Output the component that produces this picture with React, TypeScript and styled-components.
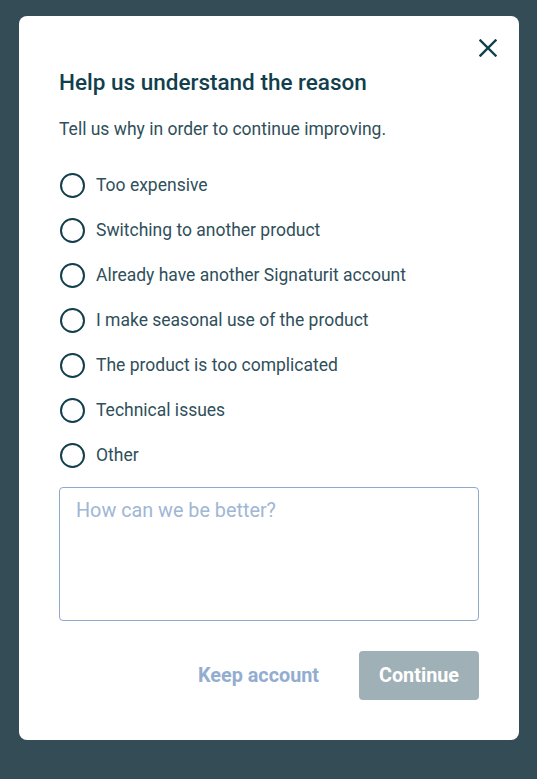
import React from "react";
import styled, { createGlobalStyle } from "styled-components";

const Global = createGlobalStyle`
  html, body { margin: 0; padding: 0; }
  body {
    background: #344c56;
    font-family: Roboto, "Noto Sans", Arial, sans-serif;
    width: 537px;
    height: 779px;
    overflow: hidden;
  }
`;

const Page = styled.div`
  padding: 16px 19px;
  box-sizing: border-box;
`;

const Modal = styled.div`
  position: relative;
  width: 500px;
  height: 724px;
  background: #ffffff;
  border-radius: 8px;
  box-sizing: border-box;
  padding: 53px 40px 40px 40px;
  display: flex;
  flex-direction: column;
`;

const Close = styled.button`
  position: absolute;
  top: 22px;
  right: 21px;
  width: 20px;
  height: 20px;
  padding: 0;
  border: none;
  background: none;
  cursor: pointer;
  display: flex;
  align-items: center;
  justify-content: center;
`;

const Title = styled.h2`
  margin: 0;
  font-size: 22.5px;
  font-weight: 500;
  line-height: 26px;
  color: #113f4e;
`;

const Subtitle = styled.p`
  margin: 24px 0 0 0;
  font-size: 17.5px;
  line-height: 21px;
  color: #2f4f5b;
`;

const Options = styled.div`
  display: flex;
  flex-direction: column;
  gap: 21px;
  margin-top: 33px;
  padding-left: 1px;
`;

const Option = styled.label`
  display: flex;
  align-items: center;
  gap: 11px;
  height: 24px;
  font-size: 17.5px;
  color: #2f4f5b;
  cursor: pointer;
`;

const Circle = styled.span`
  width: 25px;
  height: 25px;
  box-sizing: border-box;
  border: 2px solid #123f4e;
  border-radius: 50%;
  flex-shrink: 0;
`;

const TextArea = styled.textarea`
  margin-top: 20px;
  height: 134px;
  box-sizing: border-box;
  border: 1px solid #8ea9cc;
  border-radius: 4px;
  padding: 11px 16px;
  font-family: Roboto, "Noto Sans", Arial, sans-serif;
  font-size: 19.8px;
  color: #2f4f5b;
  resize: none;
  outline: none;
  &::placeholder {
    color: #a0b6d4;
  }
`;

const Actions = styled.div`
  display: flex;
  justify-content: flex-end;
  align-items: center;
  gap: 24px;
  margin-top: 30px;
`;

const TextButton = styled.button`
  background: none;
  border: none;
  font-family: Roboto, "Noto Sans", Arial, sans-serif;
  font-size: 19.8px;
  font-weight: 700;
  color: #93add0;
  padding: 0 16px;
  height: 49px;
`;

const PrimaryButton = styled.button`
  width: 120px;
  height: 49px;
  background: #9fb1b7;
  border: none;
  border-radius: 4px;
  font-family: Roboto, "Noto Sans", Arial, sans-serif;
  font-size: 19.8px;
  font-weight: 700;
  color: #ffffff;
`;

const reasons = [
  "Too expensive",
  "Switching to another product",
  "Already have another Signaturit account",
  "I make seasonal use of the product",
  "The product is too complicated",
  "Technical issues",
  "Other",
];

export default function App() {
  return (
    <Page>
      <Global />
      <Modal>
        <Close aria-label="Close">
          <svg width="18" height="18" viewBox="0 0 18 18">
            <path d="M1.5 1.5 L16.5 16.5 M16.5 1.5 L1.5 16.5" stroke="#113f4e" strokeWidth="2.4" strokeLinecap="square" />
          </svg>
        </Close>
        <Title>Help us understand the reason</Title>
        <Subtitle>Tell us why in order to continue improving.</Subtitle>
        <Options>
          {reasons.map((r) => (
            <Option key={r}>
              <Circle />
              {r}
            </Option>
          ))}
        </Options>
        <TextArea placeholder="How can we be better?" />
        <Actions>
          <TextButton>Keep account</TextButton>
          <PrimaryButton>Continue</PrimaryButton>
        </Actions>
      </Modal>
    </Page>
  );
}
